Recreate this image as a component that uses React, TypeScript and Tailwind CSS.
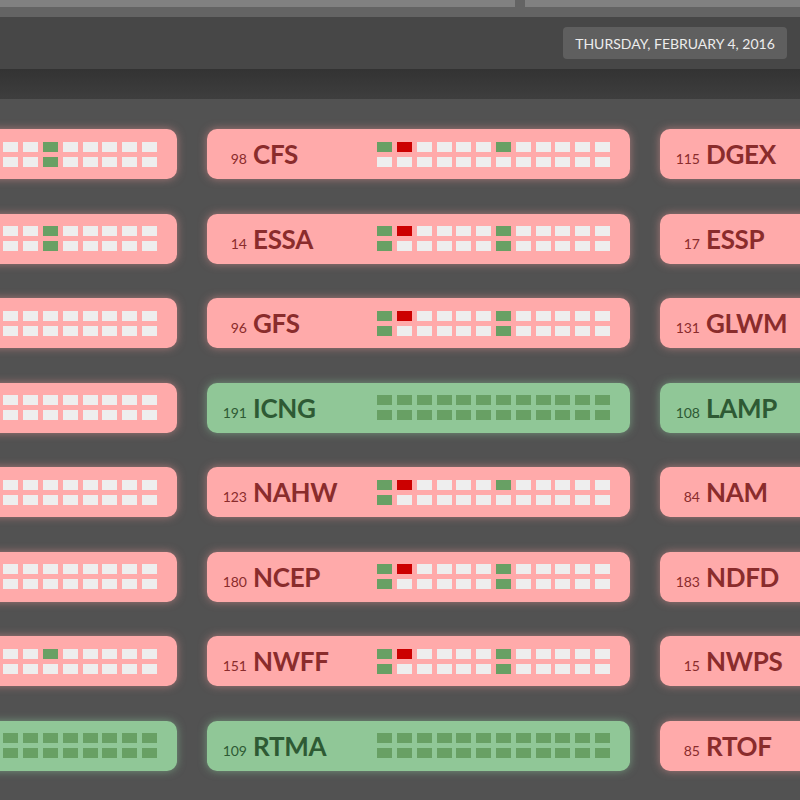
import React from "react";

type Cell = "l" | "g" | "r";

interface Item {
  n: number | null;
  name: string;
  ok: boolean;
  top: Cell[];
  bot: Cell[];
}

const light = (): Cell[] => Array(12).fill("l");
const green = (): Cell[] => Array(12).fill("g");
const mk = (greens: number[], reds: number[] = []): Cell[] => {
  const a = light();
  greens.forEach((i) => (a[i] = "g"));
  reds.forEach((i) => (a[i] = "r"));
  return a;
};

const left: Item[] = [
  { n: null, name: "", ok: false, top: mk([6]), bot: mk([6]) },
  { n: null, name: "", ok: false, top: mk([6]), bot: mk([6]) },
  { n: null, name: "", ok: false, top: light(), bot: light() },
  { n: null, name: "", ok: false, top: light(), bot: light() },
  { n: null, name: "", ok: false, top: light(), bot: light() },
  { n: null, name: "", ok: false, top: light(), bot: light() },
  { n: null, name: "", ok: false, top: mk([6]), bot: light() },
  { n: null, name: "", ok: true, top: green(), bot: green() },
];

const mid: Item[] = [
  { n: 98, name: "CFS", ok: false, top: mk([0, 6], [1]), bot: light() },
  { n: 14, name: "ESSA", ok: false, top: mk([0, 6], [1]), bot: mk([0, 6]) },
  { n: 96, name: "GFS", ok: false, top: mk([0, 6], [1]), bot: mk([0, 6]) },
  { n: 191, name: "ICNG", ok: true, top: green(), bot: green() },
  { n: 123, name: "NAHW", ok: false, top: mk([0, 6], [1]), bot: mk([0]) },
  { n: 180, name: "NCEP", ok: false, top: mk([0, 6], [1]), bot: mk([0, 6]) },
  { n: 151, name: "NWFF", ok: false, top: mk([0, 6], [1]), bot: mk([0, 6]) },
  { n: 109, name: "RTMA", ok: true, top: green(), bot: green() },
];

const right: Item[] = [
  { n: 115, name: "DGEX", ok: false, top: light(), bot: light() },
  { n: 17, name: "ESSP", ok: false, top: light(), bot: light() },
  { n: 131, name: "GLWM", ok: false, top: light(), bot: light() },
  { n: 108, name: "LAMP", ok: true, top: green(), bot: green() },
  { n: 84, name: "NAM", ok: false, top: light(), bot: light() },
  { n: 183, name: "NDFD", ok: false, top: light(), bot: light() },
  { n: 15, name: "NWPS", ok: false, top: light(), bot: light() },
  { n: 85, name: "RTOF", ok: false, top: light(), bot: light() },
];

function Sq({ c }: { c: Cell }) {
  const cls =
    c === "g" ? "bg-[#68a064]" : c === "r" ? "bg-[#cc0000]" : "bg-[#eeeeee]";
  return <div className={`h-[10px] w-[15px] ${cls}`} />;
}

function Card({ item }: { item: Item }) {
  const base = item.ok
    ? "bg-[#90c797] text-[#2e5a34] shadow-[0_0_9px_rgba(144,210,160,0.55)]"
    : "bg-[#ffaaaa] text-[#8a2c2c] shadow-[0_0_9px_rgba(255,160,160,0.5)]";
  return (
    <div
      className={`flex h-[50px] w-[423px] items-center justify-between rounded-[10px] pr-[20px] ${base}`}
    >
      <div className="flex items-baseline">
        <span className="w-[40px] text-right text-[14px] leading-none">
          {item.n ?? ""}
        </span>
        <span className="ml-[6px] text-[26px] font-bold leading-none tracking-[-0.3px]">
          {item.name}
        </span>
      </div>
      <div className="flex flex-col gap-[5px]">
        <div className="flex gap-[4.8px]">
          {item.top.map((c, i) => (
            <Sq key={i} c={c} />
          ))}
        </div>
        <div className="flex gap-[4.8px]">
          {item.bot.map((c, i) => (
            <Sq key={i} c={c} />
          ))}
        </div>
      </div>
    </div>
  );
}

function Column({ items }: { items: Item[] }) {
  return (
    <div className="flex flex-col gap-[34.57px]">
      {items.map((it, i) => (
        <Card key={i} item={it} />
      ))}
    </div>
  );
}

export default function App() {
  return (
    <div
      className="flex h-[800px] w-[800px] flex-col overflow-hidden bg-[#525252]"
      style={{ fontFamily: "Lato, 'Noto Sans', sans-serif" }}
    >
      <div className="flex h-[17px] shrink-0 items-start gap-[10px] bg-[#646464]">
        <div className="h-[7px] w-[515px] bg-[#818181]" />
        <div className="h-[7px] flex-1 bg-[#818181]" />
      </div>
      <div className="flex h-[52px] shrink-0 items-start justify-end bg-[#474747] pr-[13px] pt-[10px]">
        <div className="flex h-[32px] w-[224px] items-center justify-center rounded-[4px] bg-[#5f5f5f] pt-[2px] text-[14px] leading-none text-[#ececec]">
          THURSDAY, FEBRUARY 4, 2016
        </div>
      </div>
      <div className="h-[30px] shrink-0 bg-gradient-to-b from-[#333333] to-[#3e3e3e]" />
      <div className="ml-[-246px] flex gap-[30px] pt-[30px]">
        <Column items={left} />
        <Column items={mid} />
        <Column items={right} />
      </div>
    </div>
  );
}
